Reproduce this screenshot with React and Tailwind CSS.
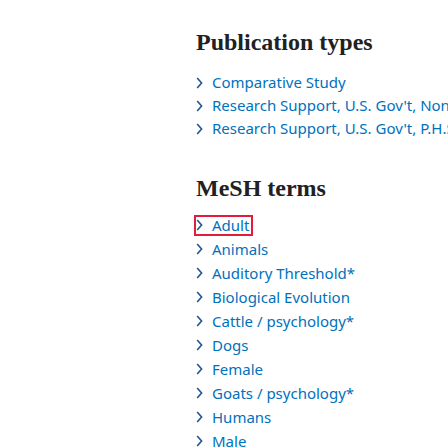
import React from "react";

const publicationTypes = [
  "Comparative Study",
  "Research Support, U.S. Gov't, Non-P.H.S.",
  "Research Support, U.S. Gov't, P.H.S.",
];

const meshTerms = [
  "Adult",
  "Animals",
  "Auditory Threshold*",
  "Biological Evolution",
  "Cattle / psychology*",
  "Dogs",
  "Female",
  "Goats / psychology*",
  "Humans",
  "Male",
];

const Chevron = () => (
  <svg width="7" height="12" viewBox="0 0 7 12" className="block shrink-0">
    <path d="M1.2 1 L5.6 6 L1.2 11" fill="none" stroke="#205493" strokeWidth="1.6" />
  </svg>
);

const Term = ({ label, highlight, rowClass }) => (
  <li className={`flex items-center ${rowClass}`}>
    <span
      className={`flex h-[21px] items-center gap-[9px] whitespace-nowrap text-[#0071bc] ${
        highlight ? "-ml-[2px] border-2 border-[#e31c3d] pr-[2px]" : ""
      }`}
    >
      <Chevron />
      <span>{label}</span>
    </span>
  </li>
);

export default function App() {
  return (
    <div
      className="h-[448px] w-[448px] overflow-hidden bg-white pl-[196px] pt-[28px]"
      style={{ fontFamily: "'Noto Sans', sans-serif" }}
    >
      <h2
        className="text-[24px] font-bold leading-7 text-[#212121]"
        style={{ fontFamily: "'Liberation Serif', serif" }}
      >
        Publication types
      </h2>
      <ul className="mt-[15px] text-[15px]">
        {publicationTypes.map((t) => (
          <Term key={t} label={t} rowClass="h-[23px]" />
        ))}
      </ul>
      <h2
        className="mt-[34px] text-[24px] font-bold leading-7 text-[#212121]"
        style={{ fontFamily: "'Liberation Serif', serif" }}
      >
        MeSH terms
      </h2>
      <ul className="mt-[11px] text-[15px]">
        {meshTerms.map((t, i) => (
          <Term key={t} label={t} highlight={i === 0} rowClass="h-6" />
        ))}
      </ul>
    </div>
  );
}
